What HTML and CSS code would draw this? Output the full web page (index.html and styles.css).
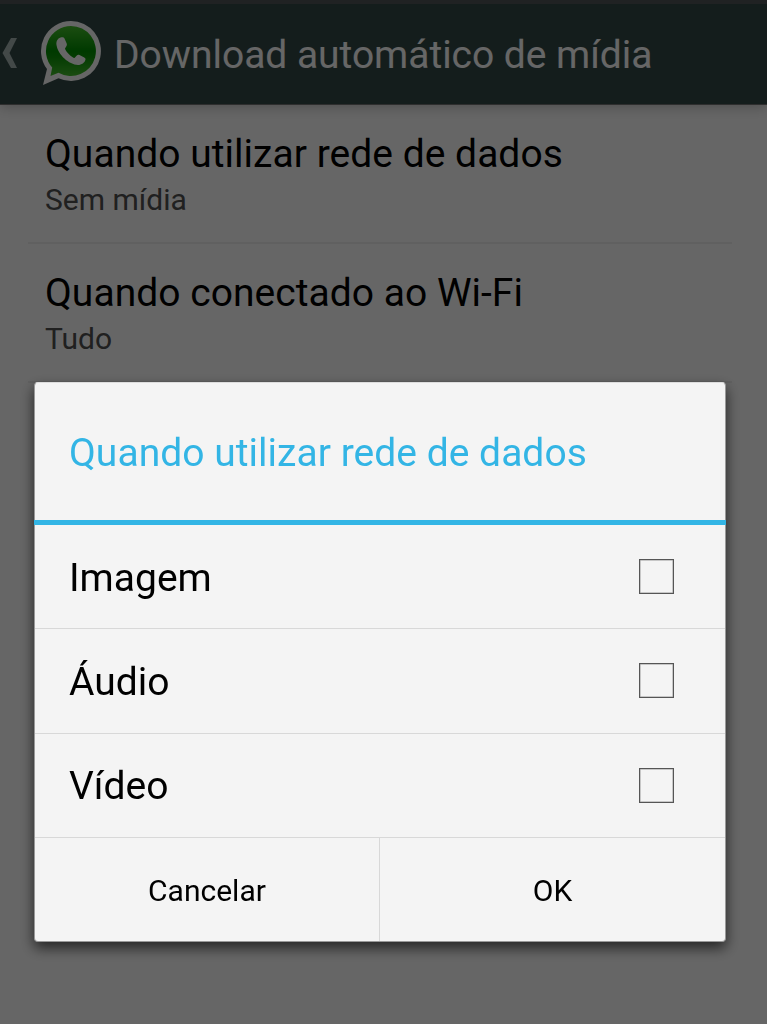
FILE: index.html
```html
<!DOCTYPE html>
<html lang="pt-BR">
<head>
    <meta charset="UTF-8">
    <meta name="viewport" content="width=device-width, initial-scale=1.0">
    <title>Download automático de mídia</title>
    <link rel="stylesheet" href="styles.css">
</head>
<body>
    <!-- Action bar -->
    <header class="action-bar">
        <svg class="back" width="16" height="30" viewBox="0 0 16 30">
            <path d="M9 0H15L7.5 15L15 30H9L.5 15Z" fill="#a8b6b4"/>
        </svg>
        <svg class="logo" width="62" height="66" viewBox="0 0 62 66">
            <defs>
                <linearGradient id="green" x1="0" y1="0" x2="0" y2="1">
                    <stop offset="0" stop-color="#46c02c"/>
                    <stop offset="0.5" stop-color="#009000"/>
                    <stop offset="0.62" stop-color="#0c9606"/>
                    <stop offset="1" stop-color="#44be2c"/>
                </linearGradient>
            </defs>
            <path d="M31 1A30 30 0 1 1 18.500 58.300L3 65L7 49A30 30 0 0 1 31 1Z" fill="#fff"/>
            <path d="M31 6A25 25 0 1 1 18.500 52.700L10.500 56L12.200 47.500A25 25 0 0 1 31 6Z" fill="url(#green)"/>
            <path d="M20.500 17.500C17.500 18.500 16 21.500 16.500 25C18 35 29 44.500 38 45C41.500 45 45 42.500 45.500 39.500C45.600 38.500 45 38 44.300 37.500L39.500 35C38.500 34.500 37.500 34.700 36.800 35.500L34.500 38C32 37.800 25.500 31.500 25 28.500L26.500 26C27 25 27 24.200 26.600 23.300L24.500 18.500C24 17 22 17 20.500 17.500Z" fill="#fff"/>
        </svg>
        <h1>Download automático de mídia</h1>
    </header>

    <!-- Settings list -->
    <ul class="settings">
        <li>
            <span class="name">Quando utilizar rede de dados</span>
            <span class="value">Sem mídia</span>
        </li>
        <li>
            <span class="name">Quando conectado ao Wi-Fi</span>
            <span class="value">Tudo</span>
        </li>
    </ul>

    <!-- Dialog -->
    <div class="overlay">
        <form class="dialog">
            <h2>Quando utilizar rede de dados</h2>
            <label class="option"><span>Imagem</span> <input type="checkbox"></label>
            <label class="option"><span>Áudio</span> <input type="checkbox"></label>
            <label class="option"><span>Vídeo</span> <input type="checkbox"></label>
            <div class="buttons">
                <button type="button">Cancelar</button>
                <button type="button">OK</button>
            </div>
        </form>
    </div>
</body>
</html>
```
FILE: styles.css
```css
* {
    box-sizing: border-box;
}

body {
    margin: 0;
    height: 1024px;
    overflow: hidden;
    font-family: Roboto, sans-serif;
    background-color: #fff;
    color: #000;
}

h1, h2 {
    margin: 0;
    font-weight: normal;
}

/* Action bar */
.action-bar {
    display: flex;
    align-items: center;
    height: 105px;
    padding: 0 0 2px 2px;
    background-color: #344a48;
    border-top: 4px solid #525558;
    border-bottom: 1px solid #737373;
    box-shadow: 0 2px 12px rgba(0, 0, 0, 0.25);
}

.logo {
    margin-left: 22px;
}

.action-bar h1 {
    margin-left: 12px;
    padding-top: 4px;
    font-size: 39px;
    line-height: 46px;
    letter-spacing: -0.04px;
    color: #fff;
}

/* Settings list */
.settings {
    list-style: none;
    margin: 0 35px 0 28px;
    padding: 0;
}

.settings li {
    display: flex;
    flex-direction: column;
    height: 139px;
    padding: 26px 18px 0 17px;
    border-bottom: 2px solid #efefef;
}

.name {
    font-size: 39px;
    line-height: 47px;
    letter-spacing: 0.03px;
}

.value {
    font-size: 30px;
    line-height: 44px;
    color: #505050;
}

/* Dialog */
.overlay {
    position: fixed;
    inset: 0;
    padding: 382px 41px 0 34px;
    background-color: rgba(0, 0, 0, 0.6);
}

.dialog {
    height: 560px;
    background-color: #f4f4f4;
    border: 1px solid #999;
    border-top-color: #ddd;
    border-radius: 4px;
    box-shadow: 0 6px 14px rgba(0, 0, 0, 0.65);
}

.dialog h2 {
    height: 142px;
    margin: 0 -1px;
    padding: 46px 0 0 35px;
    font-size: 39px;
    line-height: 48px;
    letter-spacing: 0.03px;
    color: #33b5e5;
    border-bottom: 5px solid #33b5e5;
}

.option {
    display: flex;
    align-items: center;
    justify-content: space-between;
    height: 104.33px;
    padding: 0 51px 0 34px;
    font-size: 39px;
    border-bottom: 1px solid #d8d8d8;
}

.option span {
    padding-top: 2px;
}

.option input {
    appearance: none;
    width: 35px;
    height: 35px;
    margin: 0;
    border: 1px solid #555;
    box-shadow: inset 0 0 0 0.5px #999;
}

.buttons {
    display: flex;
    height: 103px;
}

.buttons button {
    width: 344px;
    padding: 2px 0 0;
    font-family: inherit;
    font-size: 30px;
    color: #000;
    background: none;
    border: none;
}

.buttons button + button {
    flex: 1;
    border-left: 1px solid #d8d8d8;
}
```
